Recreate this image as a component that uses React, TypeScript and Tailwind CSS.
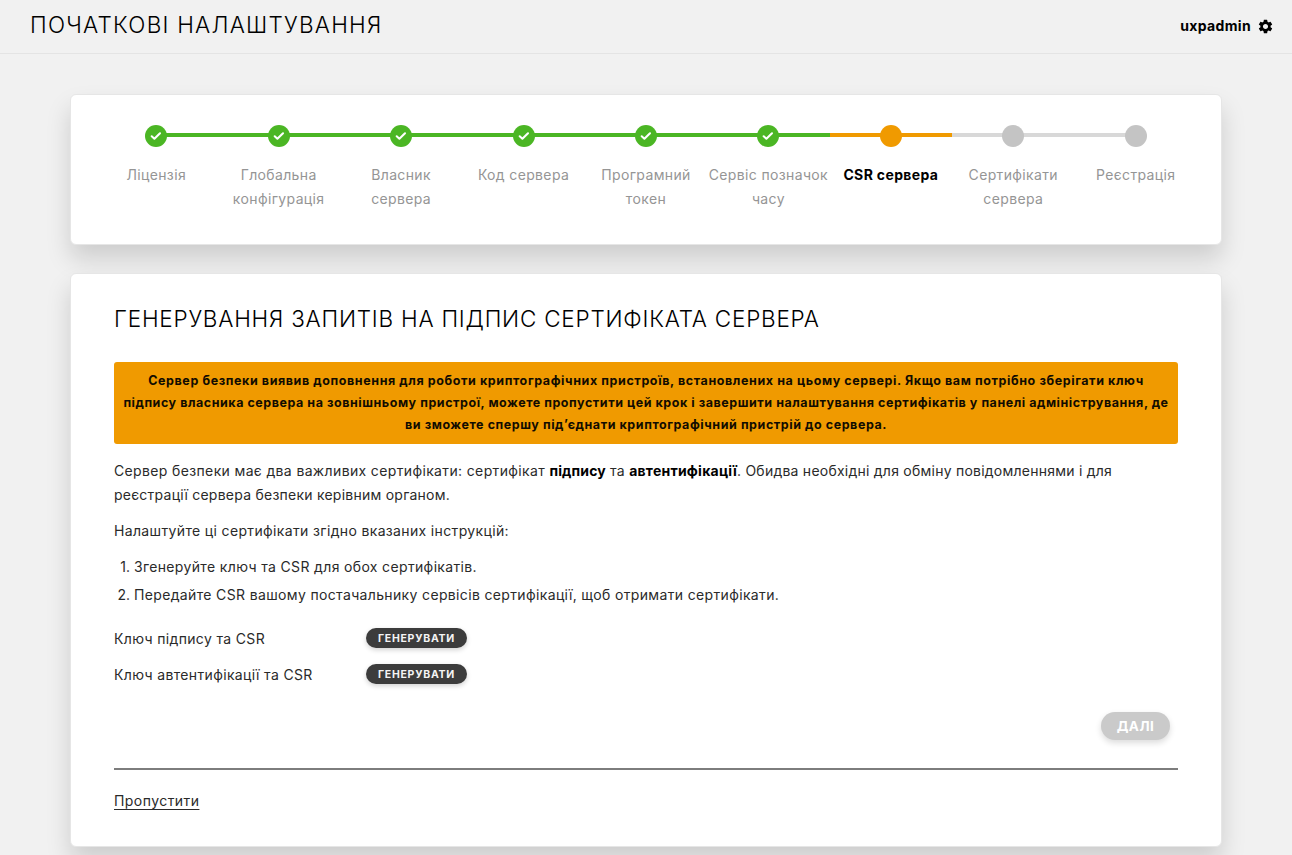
import React from "react";
import { MdSettings } from "react-icons/md";

type StepState = "done" | "current" | "todo";

interface Step {
  lines: string[];
  state: StepState;
}

const steps: Step[] = [
  { lines: ["Ліцензія"], state: "done" },
  { lines: ["Глобальна", "конфігурація"], state: "done" },
  { lines: ["Власник", "сервера"], state: "done" },
  { lines: ["Код сервера"], state: "done" },
  { lines: ["Програмний", "токен"], state: "done" },
  { lines: ["Сервіс позначок", "часу"], state: "done" },
  { lines: ["CSR сервера"], state: "current" },
  { lines: ["Сертифікати", "сервера"], state: "todo" },
  { lines: ["Реєстрація"], state: "todo" },
];

const lineColor: Record<StepState, string> = {
  done: "bg-[#4bb624]",
  current: "bg-[#f09a00]",
  todo: "bg-[#d8d8d8]",
};

const dotColor: Record<StepState, string> = {
  done: "bg-[#4bb624]",
  current: "bg-[#f09a00]",
  todo: "bg-[#c4c4c4]",
};

function StepItem({ step, first, last }: { step: Step; first: boolean; last: boolean }) {
  const line = lineColor[step.state];
  return (
    <li className="flex flex-1 flex-col items-center">
      <div className="grid h-[22px] w-full place-items-center">
        <div className="col-start-1 row-start-1 mb-[2px] flex h-1 w-full">
          <span className={`flex-1 ${first ? "" : line}`} />
          <span className={`flex-1 ${last ? "" : line}`} />
        </div>
        <span
          className={`z-10 col-start-1 row-start-1 flex size-[22px] items-center justify-center rounded-full ${dotColor[step.state]}`}
        >
          {step.state === "done" && (
            <svg viewBox="0 0 22 22" className="size-[22px]" fill="none" stroke="#fff" strokeWidth="2.1">
              <path d="M6.7 11.3 9.4 13.7 15 8.3" strokeLinecap="round" strokeLinejoin="round" />
            </svg>
          )}
        </span>
      </div>
      <div
        className={`mt-4 text-center text-[14px] leading-6 tracking-[0.36px] whitespace-nowrap ${
          step.state === "current" ? "font-bold text-black" : "text-[#959595]"
        }`}
      >
        {step.lines.map((text) => (
          <div key={text}>{text}</div>
        ))}
      </div>
    </li>
  );
}

function KeyRow({ label }: { label: string }) {
  return (
    <div className="flex h-9 items-center">
      <span className="w-[252px]">{label}</span>
      <button className="mb-[2px] flex h-5 w-[101px] items-center justify-center rounded-full bg-[#3c3c3c] pt-px text-[10.5px] font-bold tracking-[0.75px] text-[#f4f4f4] shadow-[0_2px_5px_rgba(0,0,0,0.18)]">
        ГЕНЕРУВАТИ
      </button>
    </div>
  );
}

const card =
  "rounded-md border border-[#e6e6e6] bg-white shadow-[0_14px_24px_rgba(0,0,0,0.15)]";

export default function App() {
  return (
    <div className="h-[855px] w-[1292px] overflow-hidden bg-[#f1f1f1] font-['Inter','Noto_Sans',sans-serif] text-[14px] leading-6 tracking-[0.35px] text-[#2a2a2a]">
      <header className="flex h-[54px] items-center justify-between border-b border-[#e4e4e4] pr-[18px] pb-[3px] pl-[30px]">
        <h1 className="text-[22.5px] font-light tracking-[1.24px] text-black">ПОЧАТКОВІ НАЛАШТУВАННЯ</h1>
        <div className="flex items-center gap-[6px] pt-[2px] text-[14px] font-bold text-black">
          <span>uxpadmin</span>
          <MdSettings className="mt-px size-[17px]" />
        </div>
      </header>

      <main className="mt-10 ml-[70px] flex w-[1152px] flex-col gap-7">
        <section className={`h-[151px] px-6 pt-[30px] ${card}`}>
          <ol className="flex">
            {steps.map((step, i) => (
              <StepItem key={i} step={step} first={i === 0} last={i === steps.length - 1} />
            ))}
          </ol>
        </section>

        <section className={`h-[574px] px-[43px] pt-[30px] ${card}`}>
          <h2 className="text-[22.5px] leading-[30px] font-light tracking-[0.77px] whitespace-nowrap text-black">
            ГЕНЕРУВАННЯ ЗАПИТІВ НА ПІДПИС СЕРТИФІКАТА СЕРВЕРА
          </h2>

          <div className="mt-7 h-[82px] rounded-[3px] bg-[#f09a00] pt-2 text-center text-[12.5px] leading-[22px] font-bold tracking-[0.56px] whitespace-nowrap text-[#120c00]">
            <div className="tracking-[0.59px]">
              Сервер безпеки виявив доповнення для роботи криптографічних пристроїв, встановлених на цьому сервері. Якщо вам потрібно зберігати ключ
            </div>
            <div className="tracking-[0.54px]">
              підпису власника сервера на зовнішньому пристрої, можете пропустити цей крок і завершити налаштування сертифікатів у панелі адміністрування, де
            </div>
            <div>ви зможете спершу під’єднати криптографічний пристрій до сервера.</div>
          </div>

          <p className="mt-[15px] tracking-[0.24px] whitespace-nowrap">
            <span className="tracking-[0.36px]">Сервер безпеки має два важливих сертифікати: сертифікат </span>
            <b className="tracking-[0.15px] text-black">підпису</b> та{" "}
            <b className="text-black">автентифікації</b>. Обидва необхідні для обміну повідомленнями і для
            <br />
            реєстрації сервера безпеки керівним органом.
          </p>
          <p className="mt-3">Налаштуйте ці сертифікати згідно вказаних інструкцій:</p>

          <ol className="mt-3 flex flex-col gap-1">
            <li className="flex">
              <span className="mr-1 w-4 text-right tracking-normal">1.</span>
              <span>Згенеруйте ключ та CSR для обох сертифікатів.</span>
            </li>
            <li className="flex">
              <span className="mr-1 w-4 text-right tracking-normal">2.</span>
              <span>Передайте CSR вашому постачальнику сервісів сертифікації, щоб отримати сертифікати.</span>
            </li>
          </ol>

          <div className="mt-[14px]">
            <KeyRow label="Ключ підпису та CSR" />
            <KeyRow label="Ключ автентифікації та CSR" />
          </div>

          <div className="mt-[19px] flex justify-end pr-2">
            <button
              disabled
              className="flex h-7 w-[69px] items-center justify-center rounded-full bg-[#cacaca] text-[13.5px] font-bold tracking-[0.5px] text-white shadow-[0_3px_6px_rgba(0,0,0,0.14)]"
            >
              ДАЛІ
            </button>
          </div>

          <hr className="mt-7 border-t-2 border-[#7d7d7d]" />
          <a href="#" className="mt-[19px] inline-block tracking-[0.44px] underline underline-offset-3">
            Пропустити
          </a>
        </section>
      </main>
    </div>
  );
}
